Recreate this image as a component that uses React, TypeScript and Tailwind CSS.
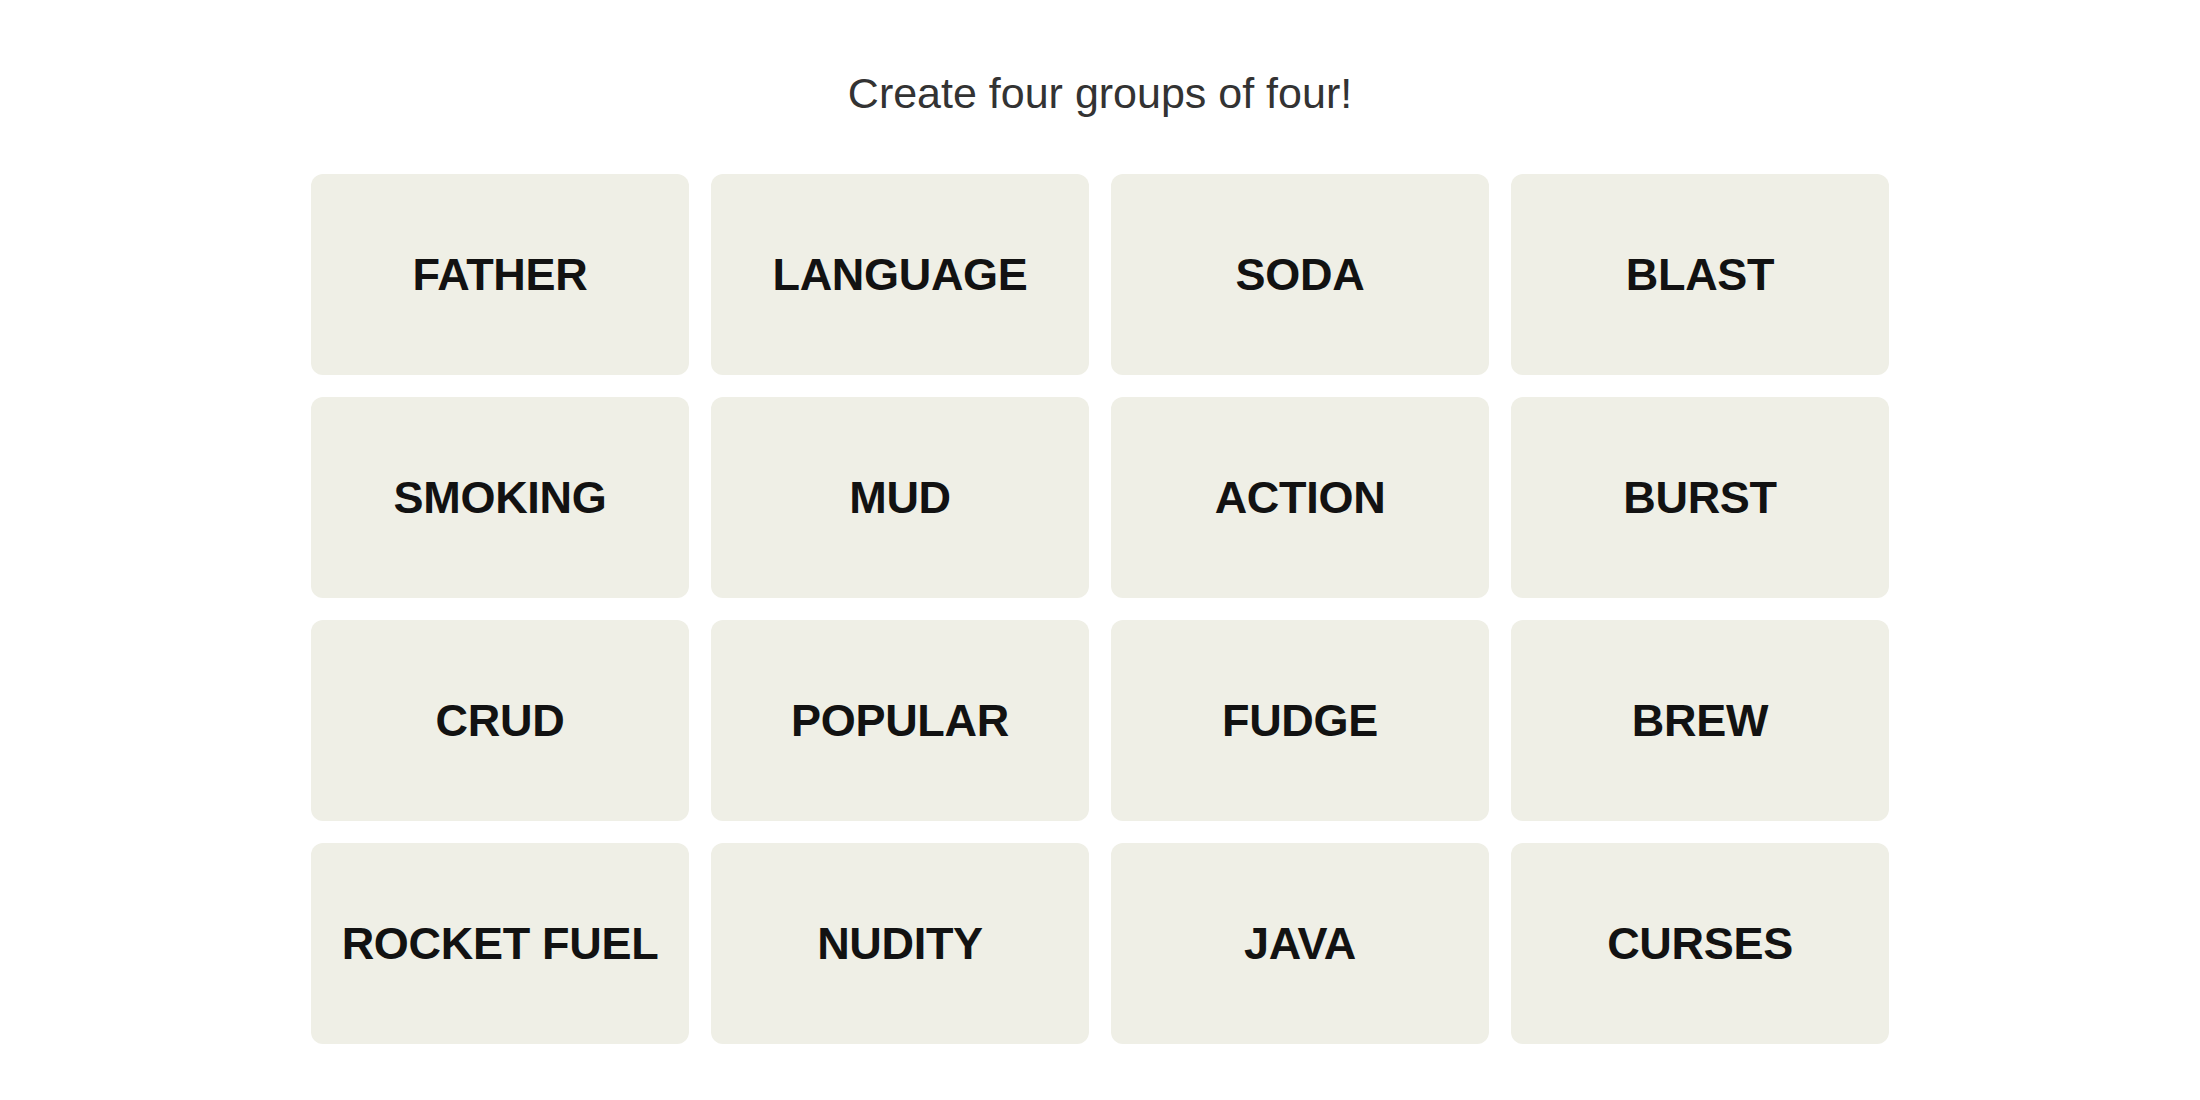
import React from "react";

const words = [
  "FATHER", "LANGUAGE", "SODA", "BLAST",
  "SMOKING", "MUD", "ACTION", "BURST",
  "CRUD", "POPULAR", "FUDGE", "BREW",
  "ROCKET FUEL", "NUDITY", "JAVA", "CURSES",
];

export default function App() {
  return (
    <div className="w-[2200px] h-[1100px] bg-white flex flex-col items-center overflow-hidden">
      <p
        className="pt-[69px] text-[43px] leading-[49px] text-[#333333] font-normal"
        style={{ fontFamily: '"Liberation Sans", Arial, sans-serif' }}
      >
        Create four groups of four!
      </p>
      <div className="mt-[56px] grid grid-cols-[repeat(4,378px)] auto-rows-[201px] gap-x-[22px] gap-y-[22px]">
        {words.map((w) => (
          <button
            key={w}
            className="bg-[#efefe6] rounded-[12px] flex items-center justify-center text-[45px] font-bold text-[#121212] tracking-[-0.3px]"
            style={{ fontFamily: '"Liberation Sans", Arial, sans-serif' }}
          >
            {w}
          </button>
        ))}
      </div>
    </div>
  );
}
